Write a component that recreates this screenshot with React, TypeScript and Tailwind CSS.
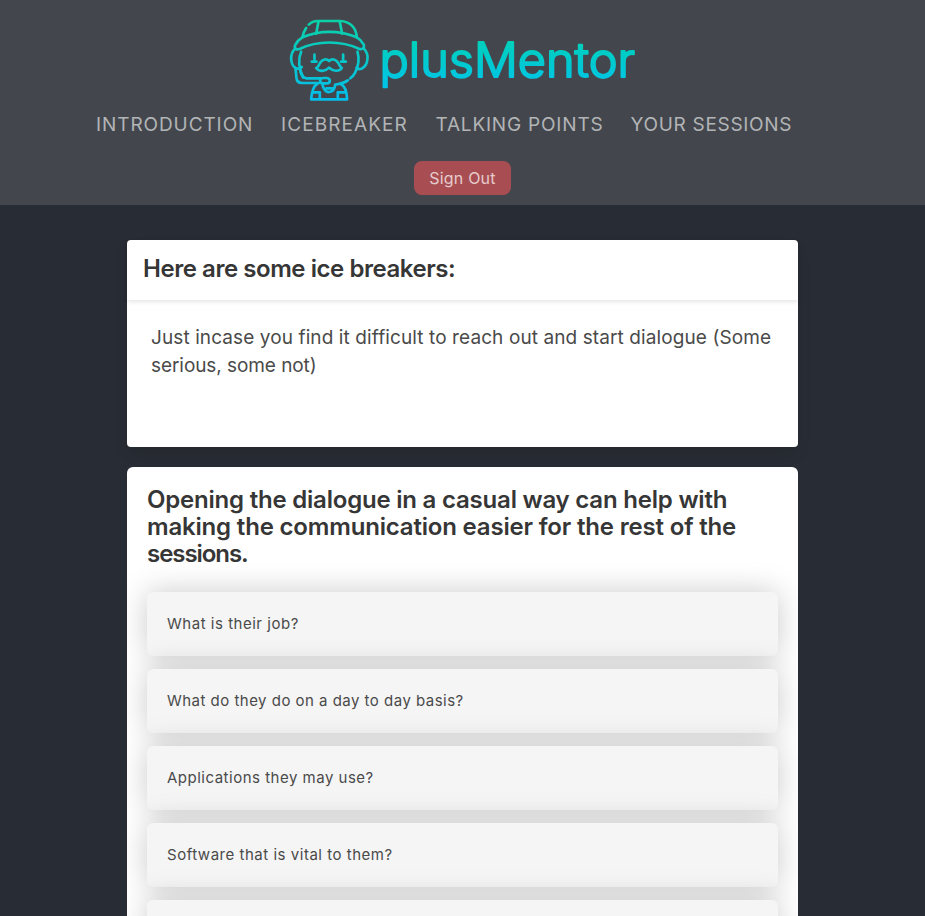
const NAV = [
  { label: 'INTRODUCTION', style: 'w-[185px] tracking-[0.91px]' },
  { label: 'ICEBREAKER', style: 'w-[154.5px] tracking-[1.08px]' },
  { label: 'TALKING POINTS', style: 'w-[195px] tracking-[0.8px]' },
  { label: 'YOUR SESSIONS', style: 'w-[163px] tracking-[0.7px]' },
];

const QUESTIONS = [
  { text: 'What is their job?', spacing: 'tracking-[0.52px]' },
  { text: 'What do they do on a day to day basis?', spacing: 'tracking-[0.48px]' },
  { text: 'Applications they may use?', spacing: 'tracking-[0.5px]' },
  { text: 'Software that is vital to them?', spacing: 'tracking-[0.52px]' },
  { text: '', spacing: 'tracking-[0.5px]' },
];

function Logo() {
  return (
    <svg width="365" height="96" viewBox="0 0 365 96" role="img" aria-label="plusMentor" className="block">
      <defs>
        <linearGradient id="face" gradientUnits="userSpaceOnUse" x1="0" y1="30" x2="0" y2="270">
          <stop offset="0" stopColor="#0bd1a8" />
          <stop offset="1" stopColor="#05bdeb" />
        </linearGradient>
        <linearGradient id="word" gradientUnits="userSpaceOnUse" x1="0" y1="29" x2="0" y2="80">
          <stop offset="0" stopColor="#00d0b8" />
          <stop offset="1" stopColor="#00c3ec" />
        </linearGradient>
      </defs>
      <g
        transform="translate(-0.2 0) scale(0.33333)"
        fill="none"
        stroke="url(#face)"
        strokeWidth="8"
        strokeLinecap="round"
        strokeLinejoin="round"
      >
        <path d="M87 44 C95 36 103 33 114 33 H181 C211 34 229 53 231 82" />
        <path d="M79 54 C72 64 70 72 68 82" />
        <path d="M116 35 L109 71 M180 35 L187 71" />
        <path d="M68 82 C118 60 180 60 231 82 C242 88 247 95 252 104 C255 112 249 119 239 117 C184 91 113 91 59 117 C47 121 42 112 47 104 C52 94 59 87 68 82 Z" />
        <path d="M64 125 C55 146 57 175 70 203 M233 125 C239 146 236 169 226 188 C221 198 217 202 211 205" />
        <path d="M204 211 C192 220 183 221 171 223" />
        <path d="M46 116 C35 125 34 137 34 147 C35 160 39 169 47 174 C54 177 62 176 66 171" />
        <path d="M252 116 C260 124 264 134 263 146 C262 161 254 172 245 176 C238 178 232 177 230 173" />
        <path d="M47 174 L50 204 C51 214 57 219 67 219 H123 M60 176 C62 193 66 201 78 205 H122" />
        <path d="M130 204 H141 C153 205 153 220 141 220 H130 C118 219 118 205 130 204 Z" />
        <path d="M104 134 V148 M96 155 H110 M190 134 V148 M184 155 H198" />
        <path d="M148 153 C140 145 129 148 122 157 C117 164 114 174 109 174 C119 187 137 184 148 173 C160 184 177 186 186 174 C181 172 179 164 174 157 C167 148 156 145 148 153 Z" />
        <path d="M112 222 C101 228 96 242 94 268 H202 C201 241 195 228 183 222" />
        <path d="M99 247 H120 V267 M196 247 H174 V267 M128 223 C130 240 141 248 149 246 C160 245 165 235 166 224 M140 235 H158" />
      </g>
      <text
        x="99.5"
        y="66.5"
        textLength="255.5"
        lengthAdjust="spacingAndGlyphs"
        fontFamily="Inter, sans-serif"
        fontSize="48"
        fontWeight="300"
        fill="url(#word)"
        stroke="url(#word)"
        strokeWidth="2"
        strokeLinejoin="round"
      >
        plusMentor
      </text>
    </svg>
  );
}

export default function App() {
  return (
    <div className="h-[916px] overflow-hidden bg-[#282c34] font-[Inter,sans-serif] text-[#4a4a4a]">
      <header className="flex h-[205px] flex-col items-center bg-[#43474d] pt-2.5">
        <Logo />
        <nav className="flex w-[733px] text-[19px] leading-[38px] text-[#b2b4b6]">
          {NAV.map((n) => (
            <a key={n.label} className={`block shrink-0 whitespace-nowrap ${n.style}`}>
              {n.label}
            </a>
          ))}
        </nav>
        <button className="mt-[17px] h-[34px] w-[97px] rounded-lg bg-[#a84e52] pb-px text-base tracking-[0.2px] text-[#e6cbcd]">
          Sign Out
        </button>
      </header>

      <main className="mx-auto mt-[35px] w-[671px]">
        <section className="h-[207px] rounded bg-white shadow-[0_8px_16px_-2px_rgba(10,10,10,0.1)]">
          <div className="h-[60px] rounded-t px-4 shadow-[0_2px_4px_rgba(10,10,10,0.1)]">
            <h2 className="whitespace-nowrap text-2xl leading-[58px] font-semibold tracking-[-0.45px] text-[#363636]">
              Here are some ice breakers:
            </h2>
          </div>
          <p className="px-6 pt-6 text-[19px] leading-7 whitespace-nowrap">
            <span className="block tracking-[0.1px]">Just incase you find it difficult to reach out and start dialogue (Some</span>
            <span className="block tracking-[-0.07px]">serious, some not)</span>
          </p>
        </section>

        <section className="mt-5 h-[600px] overflow-hidden rounded-md bg-white px-5 pt-[19px]">
          <h2 className="text-2xl leading-[27px] font-semibold whitespace-nowrap text-[#363636]">
            <span className="block tracking-[-0.21px]">Opening the dialogue in a casual way can help with</span>
            <span className="block tracking-[-0.18px]">making the communication easier for the rest of the</span>
            <span className="block tracking-[-1.05px]">sessions.</span>
          </h2>
          <ul className="mt-[25px] flex flex-col gap-[13px]">
            {QUESTIONS.map((q, i) => (
              <li
                key={i}
                className={`h-16 shrink-0 rounded-md bg-[#f5f5f5] px-5 text-[15px] leading-[64px] shadow-[0_0_30px_rgba(0,0,0,0.21)] ${q.spacing}`}
              >
                {q.text}
              </li>
            ))}
          </ul>
        </section>
      </main>
    </div>
  );
}
